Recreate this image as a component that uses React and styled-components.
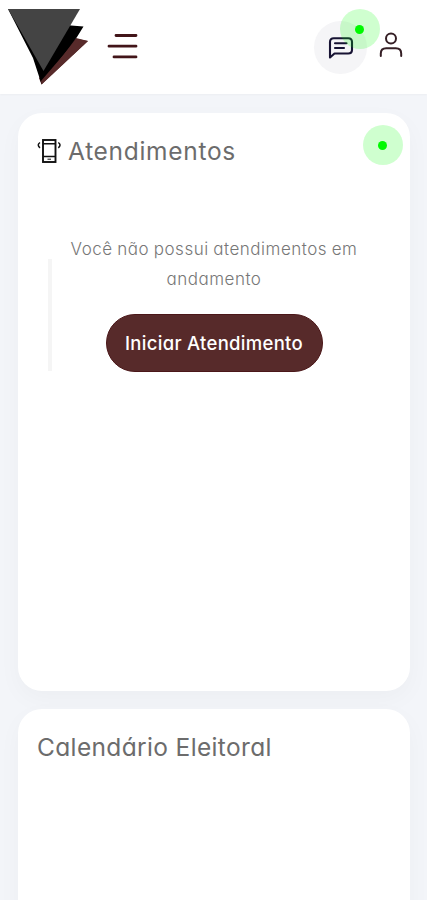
import React from 'react';

import styled, { createGlobalStyle } from 'styled-components';

const App = () => {

  return (
    <>
      <GlobalStyle />
      <Page>
        <Header>
          <Brand>
            <Logo />
            <IconButton aria-label="Menu"><MenuIcon /></IconButton>
          </Brand>
          <Actions>
            <ChatButton aria-label="Mensagens">
              <ChatIcon />
              <ChatBadge />
            </ChatButton>
            <IconButton aria-label="Perfil"><UserIcon /></IconButton>
          </Actions>
        </Header>
        <Content>
          <Card>
            <CardHeader>
              <PhoneIcon />
              <CardTitle $spacing="0.7px">Atendimentos</CardTitle>
              <CardBadge />
            </CardHeader>
            <Service>
              <Divider />
              <EmptyState>
                <Message>Você não possui atendimentos em andamento</Message>
                <StartButton>Iniciar Atendimento</StartButton>
              </EmptyState>
            </Service>
          </Card>
          <Card>
            <CardHeader>
              <CardTitle $spacing="0.35px">Calendário Eleitoral</CardTitle>
            </CardHeader>
          </Card>
        </Content>
      </Page>
    </>
  );
};

const Logo = () => (
  <svg width="82" height="78" viewBox="0 0 82 78">
    <path d="M70 30 L82 33 L35.500 76.500 L33 70Z" fill="#572a2a" />
    <path d="M2 1 L27 50 L35.500 76 L71 29 L77.500 18.500 L65 17.500Z" fill="#000" />
    <path d="M71 31 L82 33 L35.500 76.500 L35 73Z" fill="#572a2a" />
    <path d="M2 1 H74 L37.500 63Z" fill="#444" />
  </svg>
);

const MenuIcon = () => (
  <svg width="32" height="28" viewBox="0 0 32 28" fill="none" stroke="#421519" strokeWidth="2.8" strokeLinecap="round">
    <path d="M9 3.500H29M2 14.200H29M7 24.900H29" />
  </svg>
);

const ChatIcon = () => (
  <svg width="26" height="24" viewBox="0 0 26 24" fill="none" stroke="#171333" strokeWidth="2.1" strokeLinecap="round" strokeLinejoin="round">
    <path d="M2 21.500V6Q2 2.200 5.800 2.200H20.200Q24 2.200 24 6V13.700Q24 17.500 20.200 17.500H6.500Z" />
    <path d="M7 7.200H18.500M7 12H16" />
  </svg>
);

const UserIcon = () => (
  <svg width="24" height="26" viewBox="0 0 24 26" fill="none" stroke="#351f25" strokeWidth="2" strokeLinecap="round">
    <circle cx="12" cy="6.500" r="5" />
    <path d="M1.800 24V21.500Q1.800 16.200 7.200 16.200H16.800Q22.200 16.200 22.200 21.500V24" />
  </svg>
);

const PhoneIcon = () => (
  <svg width="24" height="24" viewBox="0 0 24 24" fill="none" stroke="#111">
    <rect x="6" y="1" width="12.500" height="22" strokeWidth="1.900" />
    <path d="M6 4.800H18M6 17.500H18" strokeWidth="1.500" />
    <path d="M10.500 20.200H14" strokeWidth="1" />
    <path d="M3 3.500Q-.5 6 3 8.800M21.300 3.500Q24.800 6 21.300 8.800" strokeWidth="1.500" />
  </svg>
);

const GlobalStyle = createGlobalStyle`
  *{
    box-sizing: border-box;
  }
  body{
    margin: 0;
    background: #f3f5f9;
    font-family: Inter, "Open Sans", sans-serif;
    font-feature-settings: "cv11" 1;
  }
  svg{
    display: block;
    flex-shrink: 0;
  }
  h2, p{
    margin: 0;
  }
  button{
    font: inherit;
    font-feature-settings: inherit;
    border: 0;
    padding: 0;
    background: none;
    cursor: pointer;
  }
`;

const Page = styled.div`
  height: 900px;
  overflow: hidden;
  background: #f3f5f9;
`;

const Header = styled.header`
  height: 94px;
  display: flex;
  justify-content: space-between;
  background: #fff;
  padding: 8px 24px 0 6px;
  box-shadow: 0 1px 2px rgb(0 0 0 / 3%);
`;

const Brand = styled.div`
  display: flex;
  align-items: flex-start;
  gap: 19px;
  > button{
    margin-top: 24px;
  }
`;

const Actions = styled.div`
  display: flex;
  align-items: flex-start;
  gap: 12px;
  > button:last-child{
    margin-top: 24px;
  }
`;

const IconButton = styled.button`
  display: block;
`;

const ChatButton = styled.button`
  position: relative;
  width: 53px;
  height: 53px;
  margin-top: 13px;
  display: flex;
  align-items: center;
  justify-content: center;
  border-radius: 50%;
  background: #f5f5f7;
`;

const Badge = styled.span`
  position: absolute;
  width: 40px;
  height: 40px;
  display: flex;
  align-items: center;
  justify-content: center;
  border-radius: 50%;
  background: rgb(0 255 0 / 19%);
  &::after{
    content: '';
    width: 9px;
    height: 9px;
    margin-right: 1px;
    border-radius: 50%;
    background: #00f900;
  }
`;

const ChatBadge = styled(Badge)`
  top: -12px;
  right: -13px;
`;

const CardBadge = styled(Badge)`
  top: 12px;
  right: 7px;
`;

const Content = styled.main`
  display: flex;
  flex-direction: column;
  gap: 18px;
  padding: 19px 17px 0 18px;
`;

const Card = styled.section`
  position: relative;
  height: 578px;
  flex-shrink: 0;
  padding: 20px 20px 20px 19px;
  border-radius: 24px;
  background: #fff;
  box-shadow: 0 8px 24px rgb(0 0 0 / 3%);
`;

const CardHeader = styled.div`
  height: 36px;
  display: flex;
  align-items: center;
  gap: 7px;
`;

const CardTitle = styled.h2`
  font-weight: 400;
  font-size: 24.5px;
  line-height: 36px;
  letter-spacing: ${({ $spacing }) => $spacing};
  color: #6c6c6c;
  white-space: nowrap;
`;

const Service = styled.div`
  display: flex;
  padding-top: 65px;
`;

const Divider = styled.span`
  width: 4px;
  height: 112px;
  margin: 25px 0 0 11px;
  background: #f5f5f5;
`;

const EmptyState = styled.div`
  flex: 1;
  display: flex;
  flex-direction: column;
  align-items: center;
  gap: 20px;
  padding-right: 14px;
`;

const Message = styled.p`
  width: 300px;
  font-weight: 300;
  font-size: 17px;
  line-height: 30px;
  letter-spacing: 0.5px;
  word-spacing: -0.6px;
  text-align: center;
  color: #777;
`;

const StartButton = styled.button`
  width: 217px;
  height: 58px;
  padding-bottom: 1px;
  border-radius: 29px;
  border: 1px solid #4b1719;
  background: #572a2a;
  color: #fff;
  font-weight: 500;
  font-size: 18.5px;
  letter-spacing: 0.3px;
  white-space: nowrap;
`;

export default App;
